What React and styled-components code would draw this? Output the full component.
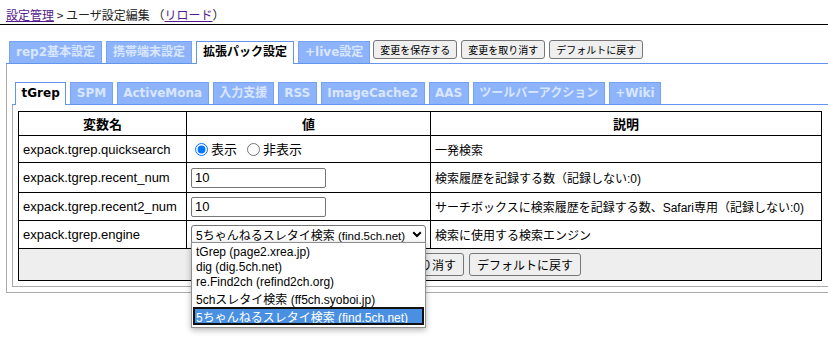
import React from "react";
import styled, { createGlobalStyle } from "styled-components";

const GlobalStyle = createGlobalStyle`
  html, body {
    margin: 0;
    padding: 0;
    background: #fff;
  }
  body {
    font-family: "Liberation Sans", "Noto Sans CJK JP", sans-serif;
    font-size: 13px;
    color: #000;
  }
`;

const Page = styled.div`
  width: 828px;
  min-height: 346px;
  overflow: hidden;
`;

const Sheet = styled.div`
  width: 900px;
`;

const Header = styled.div`
  height: 20px;
  padding: 4px 0 0 6px;
  line-height: 22px;
  border-bottom: 1px solid #000;
  font-family: "Noto Sans CJK JP", sans-serif;
  font-size: 12px;
  color: #222;
`;

const HeadLink = styled.a`
  color: #551a8b;
  text-decoration: underline;
`;

const TabBar = styled.div`
  display: flex;
  align-items: flex-start;
  gap: 4px;
  margin: ${(p) => p.$top}px 0 0 ${(p) => p.$left}px;
  padding-left: 3px;
  border-bottom: 1px solid #6495ed;
`;

const Tab = styled.div`
  height: 21px;
  padding: 0 ${(p) => p.$pad}px;
  line-height: 21px;
  font-family: "DejaVu Sans", "Noto Sans CJK JP", sans-serif;
  font-size: 12px;
  font-weight: bold;
  white-space: nowrap;
  border: 1px solid ${(p) => (p.$active ? "#6495ed" : "#77a2f3")};
  border-bottom: none;
  background: ${(p) => (p.$active ? "#fff" : "#8db4fb")};
  color: ${(p) => (p.$active ? "#000" : "#d9e6ff")};
  margin-bottom: ${(p) => (p.$active ? "-1px" : "0")};
  padding-bottom: ${(p) => (p.$active ? "1px" : "0")};
`;

const BarButton = styled.button`
  height: 19px;
  margin: -1px 0 0 ${(p) => (p.$first ? "-1px" : "0")};
  padding: 0 6px;
  font-family: "Noto Sans CJK JP", sans-serif;
  font-size: 10px;
  line-height: 17px;
  color: #000;
  background: #efefef;
  border: 1px solid #767676;
  border-radius: 3px;
`;

const Panel = styled.div`
  margin-left: ${(p) => p.$left}px;
  padding: ${(p) => p.$pad};
  border-left: 1px solid #aaa;
  border-bottom: 1px solid #aaa;
`;

const Table = styled.table`
  width: 804px;
  border-collapse: collapse;
  border: 1px solid #000;
  table-layout: fixed;
`;

const Th = styled.th`
  height: 23px;
  padding: 0 4px;
  border: 1px solid #000;
  font-weight: bold;
  text-align: center;
`;

const Td = styled.td`
  height: ${(p) => p.$h}px;
  padding: 0 4px;
  border: 1px solid #000;
  vertical-align: middle;
  white-space: nowrap;
`;

const NoteTd = styled(Td)`
  font-size: 12px;
`;

const FootCell = styled.td`
  height: 31px;
  padding: 0;
  border: 1px solid #000;
  background: #eee;
  text-align: center;
`;

const FootButtons = styled.div`
  display: flex;
  justify-content: center;
  gap: 5px;
`;

const FootButton = styled.button`
  height: 23px;
  padding: 0 7px;
  font-family: "Noto Sans CJK JP", sans-serif;
  font-size: 12px;
  color: #000;
  background: #efefef;
  border: 1px solid #767676;
  border-radius: 3px;
`;

const RadioLabel = styled.label`
  display: inline-flex;
  align-items: center;
  margin-right: 6px;
  font-family: "Noto Sans CJK JP", sans-serif;
  input {
    margin: 1px 3px 0 4px;
    width: 13px;
    height: 13px;
  }
`;

const TextInput = styled.input`
  box-sizing: border-box;
  width: 135px;
  height: 20px;
  padding: 1px 3px;
  font-family: "Liberation Sans", sans-serif;
  font-size: 13px;
  border: 1px solid #767676;
  border-radius: 2px;
`;

const SelectWrap = styled.div`
  position: relative;
  width: 235px;
`;

const SelectBox = styled.div`
  box-sizing: border-box;
  display: flex;
  align-items: center;
  justify-content: space-between;
  height: 19px;
  padding: 0 3px 0 4px;
  border: 1px solid #767676;
  border-radius: 3px;
  background: #fff;
  font-size: 12px;
  white-space: nowrap;
  svg {
    flex-shrink: 0;
  }
`;

const Small = styled.span`
  font-size: 11.5px;
`;

const Popup = styled.div`
  position: absolute;
  left: 0;
  top: 17px;
  width: 235px;
  box-sizing: border-box;
  padding: 1px 0 2px;
  background: #fff;
  border: 1px solid #8f8f8f;
  box-shadow: 0 2px 6px rgba(0, 0, 0, 0.3);
  z-index: 5;
`;

const Option = styled.div`
  margin: 0 1px;
  padding: 1px 3px 0;
  font-size: 12px;
  line-height: normal;
  white-space: nowrap;
  color: ${(p) => (p.$selected ? "#fff" : "#000")};
  background: ${(p) => (p.$selected ? "#4a90e2" : "transparent")};
  outline: ${(p) => (p.$selected ? "2px solid #111" : "none")};
  outline-offset: -2px;
`;

const engines = [
  ["tGrep", "(page2.xrea.jp)"],
  ["dig", "(dig.5ch.net)"],
  ["re.Find2ch", "(refind2ch.org)"],
  ["5chスレタイ検索", "(ff5ch.syoboi.jp)"],
  ["5ちゃんねるスレタイ検索", "(find.5ch.net)"],
];

const mainTabs = ["rep2基本設定", "携帯端末設定", "拡張パック設定", "+live設定"];
const subTabs = [
  "tGrep",
  "SPM",
  "ActiveMona",
  "入力支援",
  "RSS",
  "ImageCache2",
  "AAS",
  "ツールバーアクション",
  "+Wiki",
];

const Chevron = () => (
  <svg width="10" height="7" viewBox="0 0 10 7">
    <path d="M1.2 1.2 L5 5 L8.8 1.2" fill="none" stroke="#000" strokeWidth="2" />
  </svg>
);

export default function App() {
  return (
    <Page>
      <GlobalStyle />
      <Sheet>
        <Header>
          <HeadLink href="#">設定管理</HeadLink> &gt; ユーザ設定編集 （
          <HeadLink href="#">リロード</HeadLink>）
        </Header>

        <TabBar $top={16} $left={6}>
          {mainTabs.map((t) => (
            <Tab key={t} $pad={6} $active={t === "拡張パック設定"}>
              {t}
            </Tab>
          ))}
          <BarButton $first>変更を保存する</BarButton>
          <BarButton>変更を取り消す</BarButton>
          <BarButton>デフォルトに戻す</BarButton>
        </TabBar>

        <Panel $left={6} $pad="18px 0 5px 5px">
          <TabBar $top={0} $left={0}>
            {subTabs.map((t) => (
              <Tab key={t} $pad={5.5} $active={t === "tGrep"}>
                {t}
              </Tab>
            ))}
          </TabBar>
          <Panel $left={0} $pad="6px 0 5px 5px">
            <Table>
              <colgroup>
                <col style={{ width: "168px" }} />
                <col style={{ width: "244px" }} />
                <col />
              </colgroup>
              <thead>
                <tr>
                  <Th>変数名</Th>
                  <Th>値</Th>
                  <Th>説明</Th>
                </tr>
              </thead>
              <tbody>
                <tr>
                  <Td $h={26}>expack.tgrep.quicksearch</Td>
                  <Td $h={26}>
                    <RadioLabel>
                      <input type="radio" name="qs" defaultChecked />
                      表示
                    </RadioLabel>
                    <RadioLabel>
                      <input type="radio" name="qs" />
                      非表示
                    </RadioLabel>
                  </Td>
                  <NoteTd $h={26}>一発検索</NoteTd>
                </tr>
                <tr>
                  <Td $h={29}>expack.tgrep.recent_num</Td>
                  <Td $h={29}>
                    <TextInput defaultValue="10" />
                  </Td>
                  <NoteTd $h={29}>検索履歴を記録する数（記録しない:0)</NoteTd>
                </tr>
                <tr>
                  <Td $h={27}>expack.tgrep.recent2_num</Td>
                  <Td $h={27}>
                    <TextInput defaultValue="10" />
                  </Td>
                  <NoteTd $h={27}>
                    サーチボックスに検索履歴を記録する数、Safari専用（記録しない:0)
                  </NoteTd>
                </tr>
                <tr>
                  <Td $h={27}>expack.tgrep.engine</Td>
                  <Td $h={27}>
                    <SelectWrap>
                      <SelectBox>
                        <span>
                          5ちゃんねるスレタイ検索 <Small>(find.5ch.net)</Small>
                        </span>
                        <Chevron />
                      </SelectBox>
                      <Popup>
                        {engines.map(([name, host], i) => (
                          <Option key={name} $selected={i === engines.length - 1}>
                            {name} {host}
                          </Option>
                        ))}
                      </Popup>
                    </SelectWrap>
                  </Td>
                  <NoteTd $h={27}>検索に使用する検索エンジン</NoteTd>
                </tr>
                <tr>
                  <FootCell colSpan={3}>
                    <FootButtons>
                      <FootButton>変更を保存する</FootButton>
                      <FootButton>変更を取り消す</FootButton>
                      <FootButton>デフォルトに戻す</FootButton>
                    </FootButtons>
                  </FootCell>
                </tr>
              </tbody>
            </Table>
          </Panel>
        </Panel>
      </Sheet>
    </Page>
  );
}
